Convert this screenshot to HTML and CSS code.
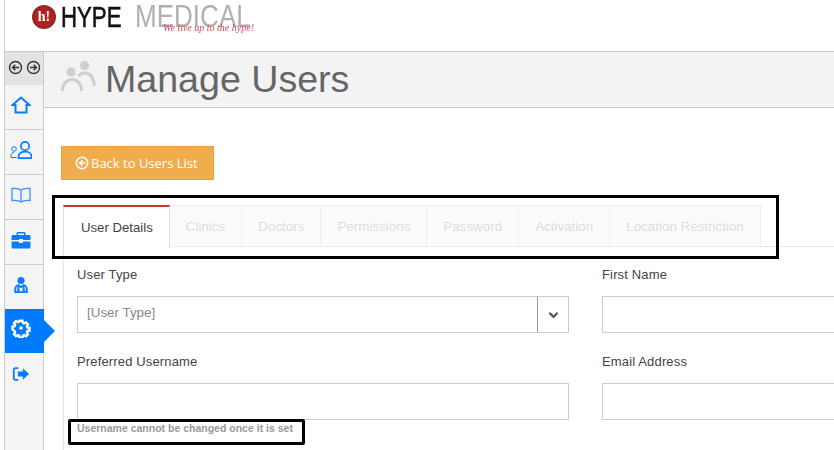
FILE: index.html
```html
<!DOCTYPE html>
<html lang="en">
<head>
<meta charset="utf-8">
<title>Manage Users</title>
<link rel="stylesheet" href="styles.css">
</head>
<body>
<div class="page">
  <header class="topbar">
    <div class="logo">
      <span class="logo-mark">h!</span>
      <span class="logo-hype">HYPE</span>
      <span class="logo-medical">MEDICAL</span>
      <span class="logo-tag">We live up to the hype!</span>
    </div>
  </header>
  <div class="shell">
    <nav class="side">
      <div class="toggle">
        <svg class="tg" viewBox="0 0 16 16"><circle cx="8" cy="8" r="6.4"/><path d="M11.8 8H5M7.8 5 4.8 8l3 3"/></svg>
        <svg class="tg" viewBox="0 0 16 16"><circle cx="8" cy="8" r="6.4"/><path d="M4.2 8H11M8.2 5l3 3-3 3"/></svg>
      </div>
      <a class="item"><svg class="ic home" viewBox="0 0 20 18"><path d="M1.500 9 10 1.500 18.500 9H15.500v7.500h-11V9z"/></svg></a>
      <a class="item"><svg class="ic people" viewBox="0 0 22 18"><circle class="big" cx="15" cy="5" r="4.200"/><path class="big" d="M8.500 17.200v-1.700c0-3 3-4.800 6.500-4.800s6.500 1.800 6.500 4.800v1.700z"/><circle class="thin" cx="4" cy="8" r="2.300"/><path class="thin" d="M6.500 16.500H1v-1.800c0-1.800 1.200-3 3-3.200"/></svg></a>
      <a class="item"><svg class="ic book" viewBox="0 0 20 16"><path d="M10 3C8 1.500 5 1 1 1.500V13.500c4-.5 7 0 9 1.500 2-1.500 5-2 9-1.500V1.500C15 1 12 1.500 10 3zM10 3v12"/></svg></a>
      <a class="item"><svg class="ic" viewBox="0 0 20 20"><path class="solid" d="M7 2h6c.8 0 1.500.7 1.500 1.500V5H18c.8 0 1.500.7 1.500 1.500V10h-7.500V9H8v1H.5V6.500C.5 5.700 1.200 5 2 5h3.500V3.500C5.500 2.700 6.200 2 7 2zm0 1.500V5h6V3.500zM.5 11.500H8v1.500h4v-1.500h7.500V17c0 .8-.7 1.500-1.500 1.500H2c-.8 0-1.500-.7-1.500-1.500z"/></svg></a>
      <a class="item"><svg class="ic small" viewBox="0 0 20 20"><circle class="solid" cx="10" cy="5" r="4"/><path class="line-p" d="M3.500 18v-3c0-3 2-4.500 3.500-5l3 2.500 3-2.500c1.500.5 3.500 2 3.500 5v3z"/><path class="line-p" d="M7 10v5M13 10v5"/><circle class="solid" cx="7" cy="16" r="1.500"/><circle class="solid" cx="13" cy="16" r="1.500"/></svg></a>
      <a class="item active"><svg class="ic gear" viewBox="0 0 20 20"><path d="M8.300 1.500h3.400l.5 2.400 1.500.7 2.100-1.300 2.400 2.400-1.300 2.100.6 1.500 2.500.5v3.400l-2.500.5-.6 1.500 1.300 2.100-2.400 2.400-2.100-1.300-1.500.6-.5 2.500H8.300l-.5-2.500-1.500-.6-2.100 1.300-2.400-2.400 1.300-2.100-.6-1.500L0 11.700V8.300l2.500-.5.600-1.500-1.300-2.100 2.400-2.400 2.100 1.300 1.500-.7z" transform="translate(1.500 1.500) scale(.85)"/><circle cx="10" cy="10" r="1.800" class="hub"/></svg></a>
      <a class="item"><svg class="ic small" viewBox="0 0 20 20"><path class="line-p" d="M7 3.500H4C2.900 3.500 2 4.400 2 5.500v9c0 1.100.9 2 2 2h3"/><path class="solid" d="M12 3.500 19 10l-7 6.500V12.800H6.500V7.200H12z"/></svg></a>
    </nav>
    <main class="main">
      <div class="titlebar">
        <svg class="title-ic" viewBox="60 60 36 32"><circle class="hd" cx="71" cy="72" r="4.600"/><circle class="hd" cx="84.500" cy="65.500" r="4.600"/><path d="M62.500 91c0-7 4-11.500 9.500-11.500S81.500 84 81.500 91M78 76c2-2 4.500-3 7-3 5 0 8.500 4.500 9.500 13"/></svg>
        <h1>Manage Users</h1>
      </div>
      <div class="content">
        <button class="back" type="button">
          <svg class="back-ic" viewBox="0 0 16 16"><circle cx="8" cy="8" r="6.500"/><path d="M12 8H5.500M8.500 4.800 5.200 8l3.300 3.200"/></svg>
          Back to Users List
        </button>
        <div class="tabs">
          <span class="tab on">User Details</span>
          <span class="tab">Clinics</span>
          <span class="tab">Doctors</span>
          <span class="tab">Permissions</span>
          <span class="tab">Password</span>
          <span class="tab">Activation</span>
          <span class="tab">Location Restriction</span>
        </div>
        <form class="form">
          <div class="field">
            <label>User Type</label>
            <div class="select"><span class="sel-val">[User Type]</span><span class="sel-btn"><svg viewBox="0 0 12 8"><path d="M1.500 1.500 6 6l4.500-4.500"/></svg></span></div>
          </div>
          <div class="field">
            <label>First Name</label>
            <div class="input"></div>
          </div>
          <div class="field">
            <label>Preferred Username</label>
            <div class="input"></div>
            <small class="hint">Username cannot be changed once it is set</small>
          </div>
          <div class="field">
            <label>Email Address</label>
            <div class="input"></div>
          </div>
        </form>
      </div>
    </main>
  </div>
</div>
<div class="mark mark-tabs"></div>
<div class="mark mark-hint"></div>
</body>
</html>
```
FILE: styles.css
```css
* { box-sizing: border-box; }
html, body { height: 100%; }
body {
  margin: 0;
  background: #fff;
  overflow: hidden;
  font-family: "Liberation Sans", sans-serif;
  color: #444;
  position: relative;
}
.page {
  margin-left: 4px;
  border-left: 1px solid #ccc;
  height: 450px;
  overflow: hidden;
}
.topbar {
  height: 52px;
  border-bottom: 1px solid #ccc;
  padding: 5px 0 0 27px;
}
.logo { position: relative; display: flex; align-items: center; height: 24px; filter: blur(.4px); }
.logo-mark {
  width: 24px;
  height: 24px;
  border-radius: 50%;
  background: #b3221e;
  border: 2px solid #8c2a27;
  color: #fff;
  font: bold 14px/20px "Liberation Serif", serif;
  text-align: center;
}
.logo-hype {
  margin-left: 5px;
  font: 400 30px/24px "Liberation Sans", sans-serif;
  -webkit-text-stroke: .6px #111;
  transform: scaleX(.74);
  transform-origin: left center;
  color: #111;
  width: 74px;
}
.logo-medical {
  font: 400 31px/24px "Liberation Sans", sans-serif;
  transform: scaleX(.84);
  transform-origin: left center;
  color: #b0b0b0;
}
.logo-tag {
  position: absolute;
  left: 131px;
  top: 17px;
  font: italic 10px/12px "Liberation Serif", serif;
  color: #d04a55;
  white-space: nowrap;
}
.shell { display: flex; height: 398px; }
.side {
  width: 39px;
  flex: none;
  background: #f4f4f4;
  border-right: 1px solid #ccc;
}
.toggle {
  height: 33px;
  background: #e2e3e5;
  display: flex;
  align-items: center;
  justify-content: center;
  gap: 3px;
  padding-bottom: 2px;
}
.tg { width: 15px; height: 15px; fill: none; stroke: #333; stroke-width: 1.500; }
.item {
  height: 45px;
  display: flex;
  align-items: center;
  justify-content: center;
  border-bottom: 1px solid #ccc;
  position: relative;
  padding: 0 6px 4px 0;
}
.item:last-child { border-bottom: 0; }
.ic { width: 20px; height: 20px; }
.ic.small { width: 18px; height: 18px; }
.home { height: 18px; fill: none; stroke: #0a7cff; stroke-width: 2; }
.people { width: 22px; height: 18px; fill: none; stroke: #0a7cff; }
.people .big { stroke-width: 1.700; }
.people .thin { stroke-width: 1; }
.book { height: 16px; fill: none; stroke: #3f8dff; stroke-width: 1.300; }
.solid { fill: #0a7cff; }
.line-p { fill: none; stroke: #0a7cff; stroke-width: 2; }
.item.active {
  background: #007bff;
  border-bottom: 0;
  margin: -1px -1px 0 0;
  height: 44px;
  padding: 0 7px 6px 0;
}
.item.active::after {
  content: "";
  position: absolute;
  left: 100%;
  top: 50%;
  margin-top: -11px;
  border-left: 11px solid #007bff;
  border-top: 11px solid transparent;
  border-bottom: 11px solid transparent;
}
.gear path { fill: none; stroke: #fff; stroke-width: 2.800; }
.gear .hub { fill: #fff; }
.main { flex: 1; min-width: 0; }
.titlebar {
  height: 56px;
  background: #f3f3f3;
  border-bottom: 1px solid #ccc;
  display: flex;
  align-items: center;
  padding: 0 0 2px 16px;
}
.title-ic {
  width: 36px;
  height: 32px;
  margin: -5px 9px 0 0;
  fill: none;
  stroke: #cfcfcf;
  stroke-width: 3;
}
.title-ic .hd { fill: #cfcfcf; stroke: none; }
h1 {
  margin: 0;
  font: 400 37.600px/46px "Liberation Sans", sans-serif;
  color: #666;
}
.content { padding: 38px 0 0 17px; }
.back {
  display: flex;
  align-items: center;
  gap: 2px;
  width: 153px;
  height: 34px;
  padding: 0 0 0 13px;
  border: 1px solid #eea236;
  background: #f0ad4e;
  color: #fff;
  font: 400 13px/20px "Open Sans", sans-serif;
}
.back-ic { width: 14px; height: 14px; fill: none; stroke: #fff; stroke-width: 1.800; }
.tabs {
  display: flex;
  margin: 25px 0 0 2px;
  border-bottom: 1px solid #e6e6e6;
  height: 42px;
}
.tab {
  height: 42px;
  padding: 0 16px;
  display: flex;
  align-items: center;
  font-size: 13.400px;
  color: #ddd;
  background: #fbfbfb;
  border: 1px solid #eee;
  border-left: 0;
  white-space: nowrap;
}
.tab.on {
  background: #fff;
  color: #444;
  border-top: 2px solid #c9372c;
  border-left: 1px solid #ddd;
  border-bottom: 0;
  border-right: 1px solid #ddd;
  height: 43px;
  position: relative;
  font-size: 13.200px;
  padding: 0 16px 0 17px;
}
.form {
  margin-left: 2px;
  border-left: 1px solid #e6e6e6;
  padding: 18px 0 0 13px;
  display: grid;
  grid-template-columns: 492px 1fr;
  column-gap: 33px;
  row-gap: 19px;
  width: 791px;
  height: 300px;
  align-content: start;
}
.field { min-width: 0; }
label {
  display: block;
  font-size: 13px;
  line-height: 20px;
  letter-spacing: .15px;
  color: #444;
  margin-bottom: 11px;
}
.select, .input {
  height: 37px;
  border: 1px solid #ccc;
  background: #fff;
}
.select { display: flex; }
.sel-val { flex: 1; padding-left: 9px; font-size: 13.400px; line-height: 31px; color: #888; }
.sel-btn {
  width: 31px;
  border-left: 1px solid #999;
  display: flex;
  align-items: center;
  justify-content: center;
}
.sel-btn svg { width: 11px; height: 8px; fill: none; stroke: #4b5563; stroke-width: 2.400; }
.hint {
  display: block;
  margin-top: 2px;
  font-size: 10.500px;
  line-height: 13px;
  font-weight: 700;
  color: #999;
}
.mark { position: absolute; border: 3px solid #000; }
.mark-tabs { left: 52px; top: 195px; width: 727px; height: 64px; }
.mark-hint { left: 68px; top: 419px; width: 237px; height: 26px; border-radius: 2px; }
```
